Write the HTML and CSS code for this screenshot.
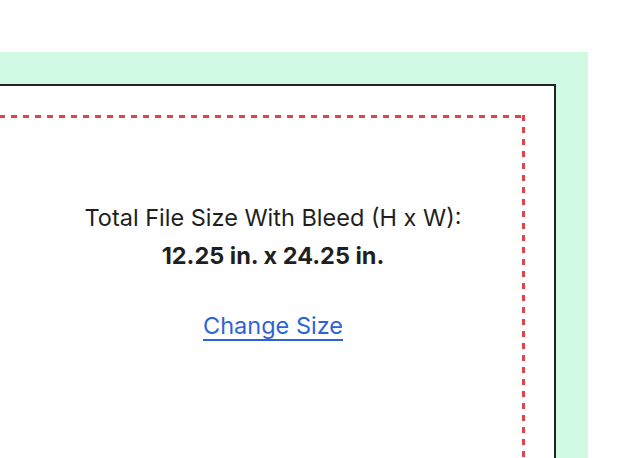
FILE: index.html
```html
<!DOCTYPE html>
<html>
<head>
<meta charset="utf-8">
<link rel="stylesheet" href="styles.css">
</head>
<body>
<div class="stage">
  <div class="panel">
    <div class="sheet">
      <div class="bleed">
        <p class="label">Total File Size With Bleed (H x W):</p>
        <p class="size">12.25 in. x 24.25 in.</p>
        <a class="change" href="#">Change Size</a>
      </div>
    </div>
  </div>
</div>
</body>
</html>
```
FILE: styles.css
```css
html, body {
  margin: 0;
  padding: 0;
  background: #ffffff;
  overflow: hidden;
}
body {
  font-family: Inter, "Noto Sans", sans-serif;
  color: #1f1f1f;
}
.stage {
  padding-top: 52px;
  height: 406px;
}
.panel {
  margin-left: -100px;
  width: 624px;
  height: 374px;
  padding: 32px 32px 0;
  background: #d1fae5;
}
.sheet {
  height: 100%;
  box-sizing: border-box;
  border: 2px solid #222222;
  border-bottom: none;
  padding: 29px 29px 0;
  background: #ffffff;
}
.bleed {
  height: 100%;
  box-sizing: border-box;
  padding: 84px 0 0 58px;
  text-align: center;
  background:
    repeating-linear-gradient(to right, #e3434b 0 6px, transparent 6px 12px) left top / 100% 3px no-repeat,
    repeating-linear-gradient(to bottom, #e3434b 0 6px, transparent 6px 12px) right top / 3px 100% no-repeat;
}
.label, .size {
  margin: 0;
  font-size: 23.5px;
  line-height: 38px;
}
.size {
  font-weight: 700;
}
.change {
  display: inline-block;
  margin-top: 32px;
  font-size: 23.5px;
  line-height: 38px;
  color: #2d63d6;
  text-decoration: underline;
  text-decoration-thickness: 2px;
  text-underline-offset: 5px;
}
```
